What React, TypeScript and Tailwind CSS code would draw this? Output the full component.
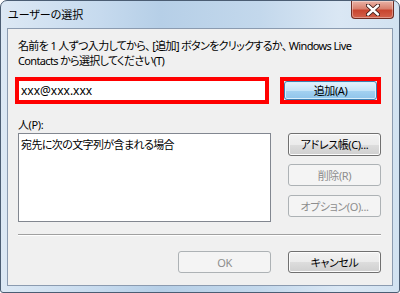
import React from "react";

const FONT = {
  fontFamily: '"Noto Sans", "Noto Sans CJK JP", sans-serif',
  fontFeatureSettings: '"palt"',
};

function Btn({
  children,
  disabled,
  className = "",
}: {
  children: React.ReactNode;
  disabled?: boolean;
  className?: string;
}) {
  if (disabled) {
    return (
      <div
        className={`flex items-center justify-center whitespace-nowrap rounded-[3px] border border-[#adb2b5] bg-[#f4f4f4] text-[11px] leading-none text-[#8d8d8d] ${className}`}
      >
        {children}
      </div>
    );
  }
  return (
    <div
      className={`flex items-center justify-center whitespace-nowrap rounded-[3px] border border-[#707070] bg-[linear-gradient(to_bottom,#f2f2f2_0%,#ebebeb_50%,#dddddd_51%,#cfcfcf_100%)] text-[11px] leading-none text-black shadow-[inset_0_0_0_1px_#fcfcfc] ${className}`}
    >
      {children}
    </div>
  );
}

export default function App() {
  return (
    <div
      className="relative flex h-[293px] w-[400px] flex-col overflow-hidden rounded-t-[7px] rounded-b-[3px] border border-[#4b5d73] bg-[linear-gradient(to_right,#dce8f4_0%,#c6daee_25%,#b6cfe7_40%,#c3d8ec_65%,#dae7f4_85%,#d2e2f1_100%)] text-[11px] tracking-[-0.4px]"
      style={FONT}
    >
      {/* title bar */}
      <div className="flex h-[27px] shrink-0 items-center pl-[7px] pb-[1px] text-[11px] leading-none tracking-normal text-black">
        ユーザーの選択
      </div>
      {/* close button */}
      <div className="absolute right-[5px] top-0 flex h-[18px] w-[43px] items-center justify-center rounded-b-[4px] border border-t-0 border-[#6e2b22] bg-[linear-gradient(to_bottom,#eab3a6_0%,#d9806e_45%,#c8452f_55%,#d3614b_100%)] shadow-[inset_0_0_0_1px_rgba(255,255,255,0.35)]">
        <svg width="14" height="12" viewBox="0 0 14 12">
          <path
            d="M2 1.5 L12 10.5 M12 1.5 L2 10.5"
            stroke="#3b1a16"
            strokeWidth="4.2"
            strokeLinecap="round"
          />
          <path
            d="M2 1.5 L12 10.5 M12 1.5 L2 10.5"
            stroke="#ffffff"
            strokeWidth="2.4"
            strokeLinecap="round"
          />
        </svg>
      </div>

      {/* client area */}
      <div className="mx-[6px] mb-[6px] flex flex-1 flex-col border border-[#8b9bb0] bg-[#f0f0f0] pl-[10px] pr-[11px] text-black">
        <div className="mt-[9px] whitespace-nowrap leading-[15px] tracking-[-0.65px]">
          <div>名前を 1 人ずつ入力してから、 [追加] ボタンをクリックするか、 Windows Live</div>
          <div>Contacts から選択してください(T)</div>
        </div>

        <div className="ml-[-3px] mt-[9px] flex">
          <div className="h-[27px] w-[257px] border-4 border-[#ff0000] bg-white">
            <div className="flex h-full items-center pl-[2px] text-[12px] leading-none tracking-normal">
              xxx@xxx.xxx
            </div>
          </div>
          <div className="ml-[11px] h-[27px] w-[102px] border-4 border-[#ff0000] bg-[#f0f0f0]">
            <div className="flex h-full items-center justify-center rounded-[3px] border border-[#3c7fb1] bg-[linear-gradient(to_bottom,#e5f3fc_0%,#c4e4f8_50%,#a3d2f1_51%,#8fc4ea_100%)] leading-none shadow-[inset_0_0_0_1px_#d8effc]">
              追加(A)
            </div>
          </div>
        </div>

        <div className="mt-[13px] leading-[15px]">人(P):</div>

        <div className="mt-[1px] flex">
          <div className="h-[89px] w-[253px] border border-[#828790] bg-white pl-[2px] pt-[3px] leading-[15px] tracking-[-0.6px]">
            宛先に次の文字列が含まれる場合
          </div>
          <div className="ml-[17px] flex flex-col">
            <Btn className="h-[23px] w-[93px]">アドレス帳(C)...</Btn>
            <Btn disabled className="mt-[8px] h-[22px] w-[93px]">
              削除(R)
            </Btn>
            <Btn disabled className="mt-[9px] h-[22px] w-[93px]">
              オプション(O)...
            </Btn>
          </div>
        </div>

        <div className="mt-[12px] h-[2px] border-t border-b border-t-[#a0a0a0] border-b-white" />

        <div className="mt-[15px] flex justify-end">
          <Btn disabled className="h-[22px] w-[93px]">
            OK
          </Btn>
          <Btn className="ml-[17px] h-[22px] w-[93px]">キャンセル</Btn>
        </div>
      </div>
    </div>
  );
}
